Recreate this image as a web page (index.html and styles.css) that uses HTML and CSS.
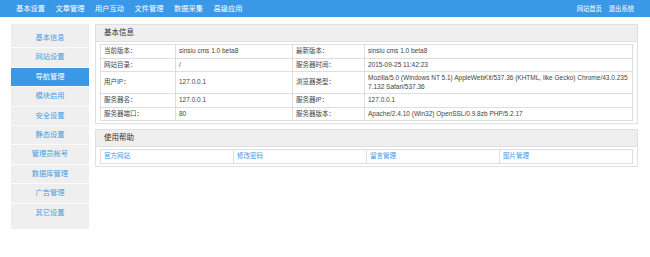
FILE: index.html
```html
<!DOCTYPE html>
<html lang="zh-CN">
<head>
  <meta charset="UTF-8">
  <meta name="viewport" content="width=device-width, initial-scale=1.0">
  <title>后台管理</title>
  <link rel="stylesheet" href="styles.css">
</head>
<body>
  <header class="topbar">
    <nav class="topnav">
      <a href="#">基本设置</a>
      <a href="#">文章管理</a>
      <a href="#">用户互动</a>
      <a href="#">文件管理</a>
      <a href="#">数据采集</a>
      <a href="#">高级应用</a>
    </nav>
    <div class="toplinks">
      <a href="#">网站首页</a>
      <a href="#">退出系统</a>
    </div>
  </header>

  <div class="wrap">
    <aside class="sidebar">
      <a href="#" class="side-item">基本信息</a>
      <a href="#" class="side-item">网站设置</a>
      <a href="#" class="side-item active">导航管理</a>
      <a href="#" class="side-item">模块启用</a>
      <a href="#" class="side-item">安全设置</a>
      <a href="#" class="side-item">静态设置</a>
      <a href="#" class="side-item">管理员帐号</a>
      <a href="#" class="side-item">数据库管理</a>
      <a href="#" class="side-item">广告管理</a>
      <a href="#" class="side-item">其它设置</a>
    </aside>

    <main class="main">
      <section class="panel">
        <h2 class="panel-title">基本信息</h2>
        <div class="panel-body">
          <table class="info">
            <colgroup>
              <col class="c1"><col class="c2"><col class="c3"><col>
            </colgroup>
            <tr>
              <td>当前版本：</td><td>sinsiu cms 1.0 beta8</td>
              <td>最新版本：</td><td>sinsiu cms 1.0 beta8</td>
            </tr>
            <tr>
              <td>网站目录：</td><td>/</td>
              <td>服务器时间：</td><td>2015-09-25 11:42:23</td>
            </tr>
            <tr>
              <td>用户IP：</td><td>127.0.0.1</td>
              <td>浏览器类型：</td><td>Mozilla/5.0 (Windows NT 5.1) AppleWebKit/537.36 (KHTML, like Gecko) Chrome/43.0.2357.132 Safari/537.36</td>
            </tr>
            <tr>
              <td>服务器名：</td><td>127.0.0.1</td>
              <td>服务器IP：</td><td>127.0.0.1</td>
            </tr>
            <tr>
              <td>服务器端口：</td><td>80</td>
              <td>服务器版本：</td><td>Apache/2.4.10 (Win32) OpenSSL/0.9.8zb PHP/5.2.17</td>
            </tr>
          </table>
        </div>
      </section>

      <section class="panel">
        <h2 class="panel-title">使用帮助</h2>
        <div class="panel-body">
          <table class="help">
            <tr>
              <td><a href="#">官方网站</a></td>
              <td><a href="#">修改密码</a></td>
              <td><a href="#">留言管理</a></td>
              <td><a href="#">图片管理</a></td>
            </tr>
          </table>
        </div>
      </section>
    </main>
  </div>
</body>
</html>
```

FILE: styles.css
```css
body {
  margin: 0;
  padding: 0;
  background-color: #fff;
  font-family: "Liberation Sans", "Noto Sans CJK SC", sans-serif;
  color: #444;
}

a {
  text-decoration: none;
}

/* top bar */
.topbar {
  height: 17px;
  background-color: #3a98e6;
  display: flex;
  justify-content: space-between;
  align-items: center;
  padding: 0 16px;
}

.topnav {
  display: flex;
  gap: 10.5px;
}

.topnav a {
  color: #fff;
  font-size: 7.25px;
  line-height: 17px;
}

.toplinks {
  display: flex;
  gap: 7px;
}

.toplinks a {
  color: #fff;
  font-size: 6.3px;
  line-height: 17px;
}

.wrap {
  display: flex;
  align-items: flex-start;
  gap: 6px;
  padding: 7px 12px 0 11px;
}

/* left menu */
.sidebar {
  width: 78px;
  flex-shrink: 0;
  background-color: #efefef;
  padding: 5px 0 7px;
  display: flex;
  flex-direction: column;
}

.side-item {
  height: 18.4px;
  line-height: 18.4px;
  border-bottom: 1px solid #fafafa;
  text-align: center;
  font-size: 7.25px;
  color: #4a9de2;
}

.side-item:last-child {
  border-bottom: none;
}

.side-item.active {
  background-color: #3a98e6;
  color: #fff;
}

/* panels */
.main {
  flex: 1;
}

.panel {
  border: 1px solid #e0e0e0;
  margin-bottom: 5px;
}

.panel-title {
  margin: 0;
  height: 16px;
  line-height: 16px;
  padding-left: 8px;
  background-color: #efefef;
  border-bottom: 1px solid #e0e0e0;
  font-size: 7.5px;
  font-weight: normal;
  color: #333;
}

.panel-body {
  padding: 2px 4px 2px 4px;
}

table {
  width: 100%;
  border-collapse: collapse;
  table-layout: fixed;
}

td {
  border: 1px solid #dedede;
  padding: 2px 3px;
  font-size: 6.5px;
  line-height: 8.5px;
  color: #444;
  word-break: break-all;
  vertical-align: middle;
}

.info .c1 {
  width: 75px;
}

.info .c2 {
  width: 117px;
}

.info .c3 {
  width: 72px;
}

.help td a {
  color: #3a98e6;
}
```
